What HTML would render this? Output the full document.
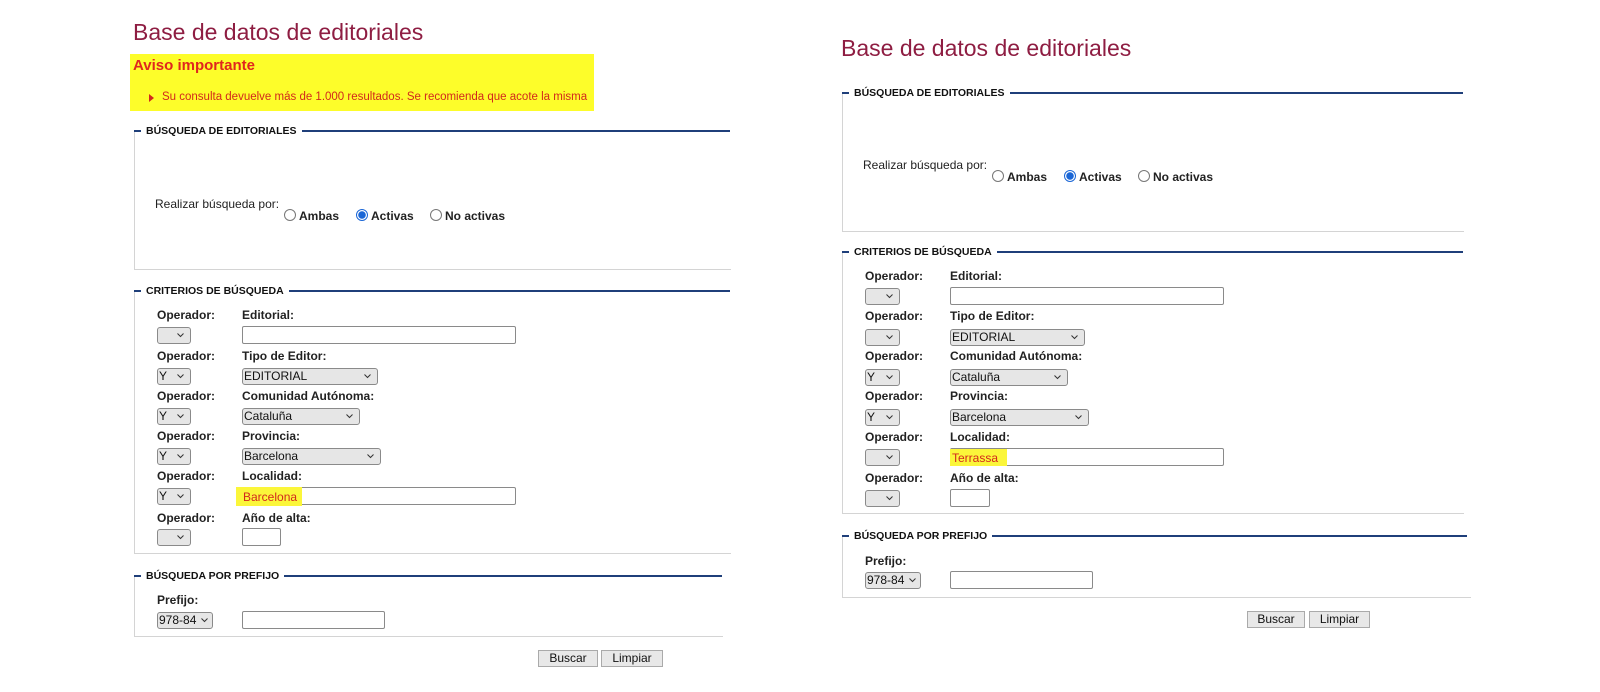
<!DOCTYPE html>
<html><head><meta charset="utf-8"><style>
body{margin:0;width:1600px;height:692px;background:#fff;position:relative;overflow:hidden;font-family:"Liberation Sans",sans-serif}
div,span{position:absolute;box-sizing:border-box}
.h{font-size:23px;color:#8e1d42;white-space:nowrap}
.ln{height:2px;background:#1f3f7a}
.bx{border-left:1px solid #d4d4d4;border-bottom:1px solid #d4d4d4}
.lg{background:#fff;font-weight:bold;font-size:10.5px;color:#111;padding:0 5px;white-space:nowrap;line-height:14px}
.t{font-weight:bold;font-size:12px;color:#222;white-space:nowrap;line-height:14px}
.n{font-size:12px;color:#222;white-space:nowrap;line-height:14px}
.sel{height:17px;border:1px solid #8a8a8a;border-radius:3px;background:#e6e6e6;font-size:12px;line-height:15px;padding-left:1px;color:#111;white-space:nowrap}
.sel svg{position:absolute;right:6px;top:5px}
.inp{height:18px;border:1px solid #8a8a8a;border-radius:2px;background:#fff}
.r{width:12px;height:12px;border:1px solid #777;border-radius:50%;background:#fff}
.r.on{border-color:#1a66d6;background:radial-gradient(circle,#1a66d6 0 3.5px,#fff 4px)}
.btn{height:17px;border:1px solid #aaa;background:#e8e8e8;font-size:12px;line-height:15px;text-align:center;color:#111}
.hl{background:#fbf63a}
</style></head><body>

<!-- LEFT -->
<div class="h" style="left:133px;top:19px">Base de datos de editoriales</div>
<div style="left:130px;top:54px;width:464px;height:57px;background:#fdfd2a"></div>
<div style="left:133px;top:57px;font-weight:bold;font-size:15px;color:#e0261e;white-space:nowrap">Aviso importante</div>
<div style="left:149px;top:94px;width:0;height:0;border-left:5px solid #d2281c;border-top:4px solid transparent;border-bottom:4px solid transparent"></div>
<div style="left:162px;top:91px;font-size:11.5px;color:#d2281c;white-space:nowrap">Su consulta devuelve más de 1.000 resultados. Se recomienda que acote la misma</div>

<div class="bx" style="left:134px;top:131px;width:597px;height:139px"></div>
<div class="ln" style="left:134px;top:130px;width:596px"></div>
<div class="lg" style="left:141px;top:124px">BÚSQUEDA DE EDITORIALES</div>
<div class="n" style="left:155px;top:197px">Realizar búsqueda por:</div>
<div class="r" style="left:284px;top:209px"></div><div class="t" style="left:299px;top:209px">Ambas</div>
<div class="r on" style="left:356px;top:209px"></div><div class="t" style="left:371px;top:209px">Activas</div>
<div class="r" style="left:430px;top:209px"></div><div class="t" style="left:445px;top:209px">No activas</div>

<div class="bx" style="left:134px;top:291px;width:597px;height:263px"></div>
<div class="ln" style="left:134px;top:290px;width:596px"></div>
<div class="lg" style="left:141px;top:284px">CRITERIOS DE BÚSQUEDA</div>

<div class="t" style="left:157px;top:308px">Operador:</div><div class="t" style="left:242px;top:308px">Editorial:</div>
<div class="sel" style="left:157px;top:327px;width:34px"><svg width="7" height="5"><path d="M.5 .5L3.5 3.5L6.5 .5" stroke="#333" fill="none"/></svg></div>
<div class="inp" style="left:242px;top:326px;width:274px"></div>

<div class="t" style="left:157px;top:349px">Operador:</div><div class="t" style="left:242px;top:349px">Tipo de Editor:</div>
<div class="sel" style="left:157px;top:368px;width:34px">Y<svg width="7" height="5"><path d="M.5 .5L3.5 3.5L6.5 .5" stroke="#333" fill="none"/></svg></div>
<div class="sel" style="left:242px;top:368px;width:136px">EDITORIAL<svg width="7" height="5"><path d="M.5 .5L3.5 3.5L6.5 .5" stroke="#333" fill="none"/></svg></div>

<div class="t" style="left:157px;top:389px">Operador:</div><div class="t" style="left:242px;top:389px">Comunidad Autónoma:</div>
<div class="sel" style="left:157px;top:408px;width:34px">Y<svg width="7" height="5"><path d="M.5 .5L3.5 3.5L6.5 .5" stroke="#333" fill="none"/></svg></div>
<div class="sel" style="left:242px;top:408px;width:118px">Cataluña<svg width="7" height="5"><path d="M.5 .5L3.5 3.5L6.5 .5" stroke="#333" fill="none"/></svg></div>

<div class="t" style="left:157px;top:429px">Operador:</div><div class="t" style="left:242px;top:429px">Provincia:</div>
<div class="sel" style="left:157px;top:448px;width:34px">Y<svg width="7" height="5"><path d="M.5 .5L3.5 3.5L6.5 .5" stroke="#333" fill="none"/></svg></div>
<div class="sel" style="left:242px;top:448px;width:139px">Barcelona<svg width="7" height="5"><path d="M.5 .5L3.5 3.5L6.5 .5" stroke="#333" fill="none"/></svg></div>

<div class="t" style="left:157px;top:469px">Operador:</div><div class="t" style="left:242px;top:469px">Localidad:</div>
<div class="sel" style="left:157px;top:488px;width:34px">Y<svg width="7" height="5"><path d="M.5 .5L3.5 3.5L6.5 .5" stroke="#333" fill="none"/></svg></div>
<div class="inp" style="left:242px;top:487px;width:274px"></div>
<div class="hl" style="left:236px;top:487px;width:66px;height:19px"></div>
<div class="n" style="left:243px;top:490px;color:#d2281c">Barcelona</div>

<div class="t" style="left:157px;top:511px">Operador:</div><div class="t" style="left:242px;top:511px">Año de alta:</div>
<div class="sel" style="left:157px;top:529px;width:34px"><svg width="7" height="5"><path d="M.5 .5L3.5 3.5L6.5 .5" stroke="#333" fill="none"/></svg></div>
<div class="inp" style="left:242px;top:528px;width:39px"></div>

<div class="bx" style="left:134px;top:576px;width:589px;height:61px"></div>
<div class="ln" style="left:134px;top:575px;width:588px"></div>
<div class="lg" style="left:141px;top:569px">BÚSQUEDA POR PREFIJO</div>
<div class="t" style="left:157px;top:593px">Prefijo:</div>
<div class="sel" style="left:157px;top:612px;width:56px">978-84<svg width="7" height="5" style="right:4px"><path d="M.5 .5L3.5 3.5L6.5 .5" stroke="#333" fill="none"/></svg></div>
<div class="inp" style="left:242px;top:611px;width:143px"></div>
<div class="btn" style="left:538px;top:650px;width:60px">Buscar</div>
<div class="btn" style="left:601px;top:650px;width:62px">Limpiar</div>

<!-- RIGHT -->
<div class="h" style="left:841px;top:35px">Base de datos de editoriales</div>

<div class="bx" style="left:842px;top:93px;width:622px;height:139px"></div>
<div class="ln" style="left:842px;top:92px;width:621px"></div>
<div class="lg" style="left:849px;top:86px">BÚSQUEDA DE EDITORIALES</div>
<div class="n" style="left:863px;top:158px">Realizar búsqueda por:</div>
<div class="r" style="left:992px;top:170px"></div><div class="t" style="left:1007px;top:170px">Ambas</div>
<div class="r on" style="left:1064px;top:170px"></div><div class="t" style="left:1079px;top:170px">Activas</div>
<div class="r" style="left:1138px;top:170px"></div><div class="t" style="left:1153px;top:170px">No activas</div>

<div class="bx" style="left:842px;top:252px;width:622px;height:262px"></div>
<div class="ln" style="left:842px;top:251px;width:621px"></div>
<div class="lg" style="left:849px;top:245px">CRITERIOS DE BÚSQUEDA</div>

<div class="t" style="left:865px;top:269px">Operador:</div><div class="t" style="left:950px;top:269px">Editorial:</div>
<div class="sel" style="left:865px;top:288px;width:35px"><svg width="7" height="5"><path d="M.5 .5L3.5 3.5L6.5 .5" stroke="#333" fill="none"/></svg></div>
<div class="inp" style="left:950px;top:287px;width:274px"></div>

<div class="t" style="left:865px;top:309px">Operador:</div><div class="t" style="left:950px;top:309px">Tipo de Editor:</div>
<div class="sel" style="left:865px;top:329px;width:35px"><svg width="7" height="5"><path d="M.5 .5L3.5 3.5L6.5 .5" stroke="#333" fill="none"/></svg></div>
<div class="sel" style="left:950px;top:329px;width:135px">EDITORIAL<svg width="7" height="5"><path d="M.5 .5L3.5 3.5L6.5 .5" stroke="#333" fill="none"/></svg></div>

<div class="t" style="left:865px;top:349px">Operador:</div><div class="t" style="left:950px;top:349px">Comunidad Autónoma:</div>
<div class="sel" style="left:865px;top:369px;width:35px">Y<svg width="7" height="5"><path d="M.5 .5L3.5 3.5L6.5 .5" stroke="#333" fill="none"/></svg></div>
<div class="sel" style="left:950px;top:369px;width:118px">Cataluña<svg width="7" height="5"><path d="M.5 .5L3.5 3.5L6.5 .5" stroke="#333" fill="none"/></svg></div>

<div class="t" style="left:865px;top:389px">Operador:</div><div class="t" style="left:950px;top:389px">Provincia:</div>
<div class="sel" style="left:865px;top:409px;width:35px">Y<svg width="7" height="5"><path d="M.5 .5L3.5 3.5L6.5 .5" stroke="#333" fill="none"/></svg></div>
<div class="sel" style="left:950px;top:409px;width:139px">Barcelona<svg width="7" height="5"><path d="M.5 .5L3.5 3.5L6.5 .5" stroke="#333" fill="none"/></svg></div>

<div class="t" style="left:865px;top:430px">Operador:</div><div class="t" style="left:950px;top:430px">Localidad:</div>
<div class="sel" style="left:865px;top:449px;width:35px"><svg width="7" height="5"><path d="M.5 .5L3.5 3.5L6.5 .5" stroke="#333" fill="none"/></svg></div>
<div class="inp" style="left:950px;top:448px;width:274px"></div>
<div class="hl" style="left:950px;top:449px;width:57px;height:17px"></div>
<div class="n" style="left:952px;top:451px;color:#d2281c">Terrassa</div>

<div class="t" style="left:865px;top:471px">Operador:</div><div class="t" style="left:950px;top:471px">Año de alta:</div>
<div class="sel" style="left:865px;top:490px;width:35px"><svg width="7" height="5"><path d="M.5 .5L3.5 3.5L6.5 .5" stroke="#333" fill="none"/></svg></div>
<div class="inp" style="left:950px;top:489px;width:40px"></div>

<div class="bx" style="left:842px;top:536px;width:629px;height:62px"></div>
<div class="ln" style="left:842px;top:535px;width:625px"></div>
<div class="lg" style="left:849px;top:529px">BÚSQUEDA POR PREFIJO</div>
<div class="t" style="left:865px;top:554px">Prefijo:</div>
<div class="sel" style="left:865px;top:572px;width:56px">978-84<svg width="7" height="5" style="right:4px"><path d="M.5 .5L3.5 3.5L6.5 .5" stroke="#333" fill="none"/></svg></div>
<div class="inp" style="left:950px;top:571px;width:143px"></div>
<div class="btn" style="left:1247px;top:611px;width:58px">Buscar</div>
<div class="btn" style="left:1309px;top:611px;width:61px">Limpiar</div>
</body></html>
